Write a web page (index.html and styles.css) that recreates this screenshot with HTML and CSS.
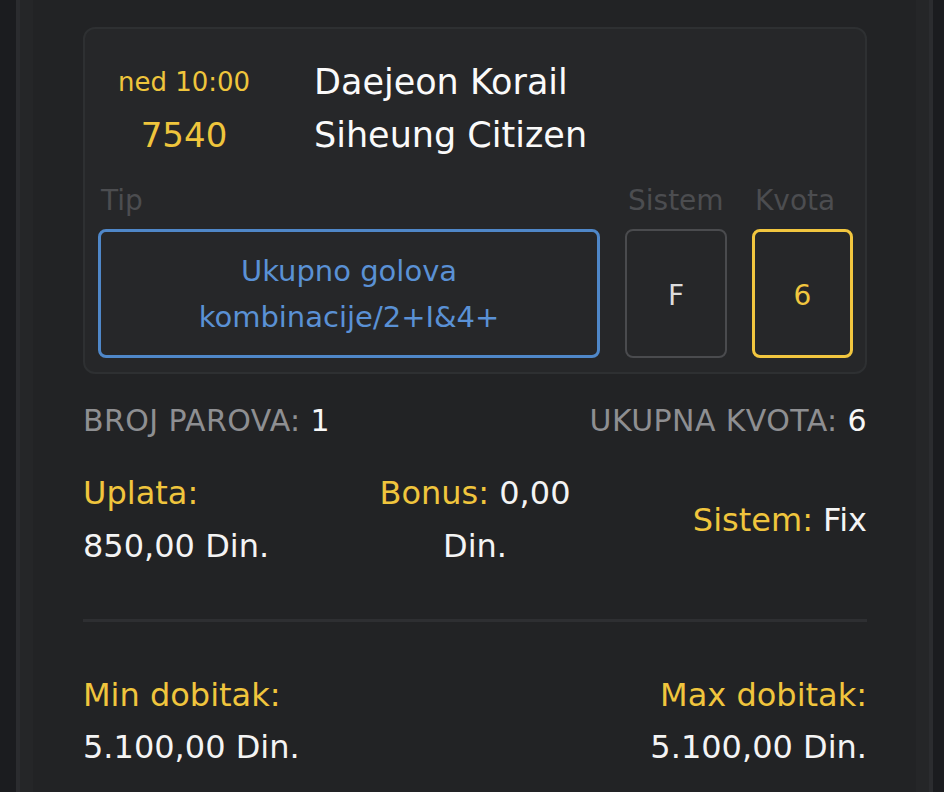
FILE: index.html
```html
<!DOCTYPE html>
<html>
<head>
    <meta charset="utf-8">
    <meta name="viewport" content="width=device-width, initial-scale=1.0">
    <title>Tiket</title>
    <link rel="stylesheet" href="styles.css">
</head>
<body>
  <div class="frame">
    <div class="panel">

      <div class="match">
        <div class="match-head">
          <div class="time">ned 10:00</div>
          <div class="team">Daejeon Korail</div>
          <div class="code">7540</div>
          <div class="team">Siheung Citizen</div>
        </div>

        <div class="picks">
          <div class="label">Tip</div>
          <div class="label">Sistem</div>
          <div class="label">Kvota</div>
          <div class="box box-tip">Ukupno golova kombinacije/2+I&amp;4+</div>
          <div class="box box-sys">F</div>
          <div class="box box-odd">6</div>
        </div>
      </div>

      <div class="totals">
        <div>BROJ PAROVA: <span class="val">1</span></div>
        <div>UKUPNA KVOTA: <span class="val">6</span></div>
      </div>

      <div class="stake">
        <div class="st-left">
          <div class="gold">Uplata:</div>
          <div>850,00 Din.</div>
        </div>
        <div class="st-mid">
          <div><span class="gold">Bonus:</span> 0,00</div>
          <div>Din.</div>
        </div>
        <div class="st-right"><span class="gold">Sistem:</span> Fix</div>
      </div>

      <hr class="sep">

      <div class="wins">
        <div>
          <div class="gold">Min dobitak:</div>
          <div>5.100,00 Din.</div>
        </div>
        <div class="right">
          <div class="gold">Max dobitak:</div>
          <div>5.100,00 Din.</div>
        </div>
      </div>

    </div>
  </div>
</body>
</html>
```

FILE: styles.css
```css
body {
  margin: 0;
  background: #1b1c1f;
  font-family: "DejaVu Sans", "Open Sans", sans-serif;
  color: #f4f4f4;
}

.frame {
  margin-left: 16px;
  width: 917px;
  height: 792px;
  box-sizing: border-box;
  border-left: 4px solid #2b2c2f;
  border-right: 4px solid #2b2c2f;
  padding: 0 13px;
  background: #252628;
}

.panel {
  height: 100%;
  background: #222325;
  padding: 27px 49px 0 50px;
  box-sizing: border-box;
}

/* match card */
.match {
  background: #262729;
  border: 2px solid #2e3032;
  border-radius: 12px;
  padding: 0 13px 14px 13px;
}

.match-head {
  display: grid;
  grid-template-columns: 172px 1fr;
  column-gap: 44px;
  padding-top: 27px;
  line-height: 53px;
}

.time {
  color: #efc53c;
  font-size: 26px;
  text-align: center;
}

.code {
  color: #efc53c;
  font-size: 34px;
  text-align: center;
}

.team {
  font-size: 35px;
  color: #fafafa;
}

.picks {
  display: grid;
  grid-template-columns: 502px 102px 101px;
  column-gap: 25px;
  row-gap: 11px;
  margin-top: 22px;
}

.label {
  color: #4c4d50;
  font-size: 28px;
  line-height: 34px;
  padding-left: 3px;
}

.box {
  height: 129px;
  box-sizing: border-box;
  border-radius: 8px;
  display: flex;
  align-items: center;
  justify-content: center;
  text-align: center;
}

.box-tip {
  border: 3px solid #4f87c8;
  color: #5a91d5;
  font-size: 29px;
  line-height: 46px;
  padding: 0 80px;
}

.box-sys {
  border: 2px solid #4a4b4e;
  color: #dcdcdc;
  font-size: 28px;
  padding-top: 3px;
}

.box-odd {
  border: 3px solid #f1c63f;
  color: #f1c63f;
  font-size: 28px;
  padding-top: 3px;
}

/* summary */
.totals {
  display: flex;
  justify-content: space-between;
  color: #8e8f92;
  font-size: 30px;
  letter-spacing: 0.4px;
  line-height: 40px;
  margin-top: 27px;
}

.val {
  color: #f7f7f7;
}

.gold {
  color: #f0c53d;
}

.stake {
  display: grid;
  grid-template-columns: 1fr 215px 1fr;
  align-items: center;
  font-size: 32px;
  line-height: 53px;
  margin-top: 26px;
}

.st-mid {
  text-align: center;
}

.st-right {
  text-align: right;
}

.sep {
  border: 0;
  height: 3px;
  background: #2e2f32;
  margin: 46px 0 0 0;
}

.wins {
  display: flex;
  justify-content: space-between;
  font-size: 32px;
  line-height: 52px;
  margin-top: 47px;
}

.right {
  text-align: right;
}
```
